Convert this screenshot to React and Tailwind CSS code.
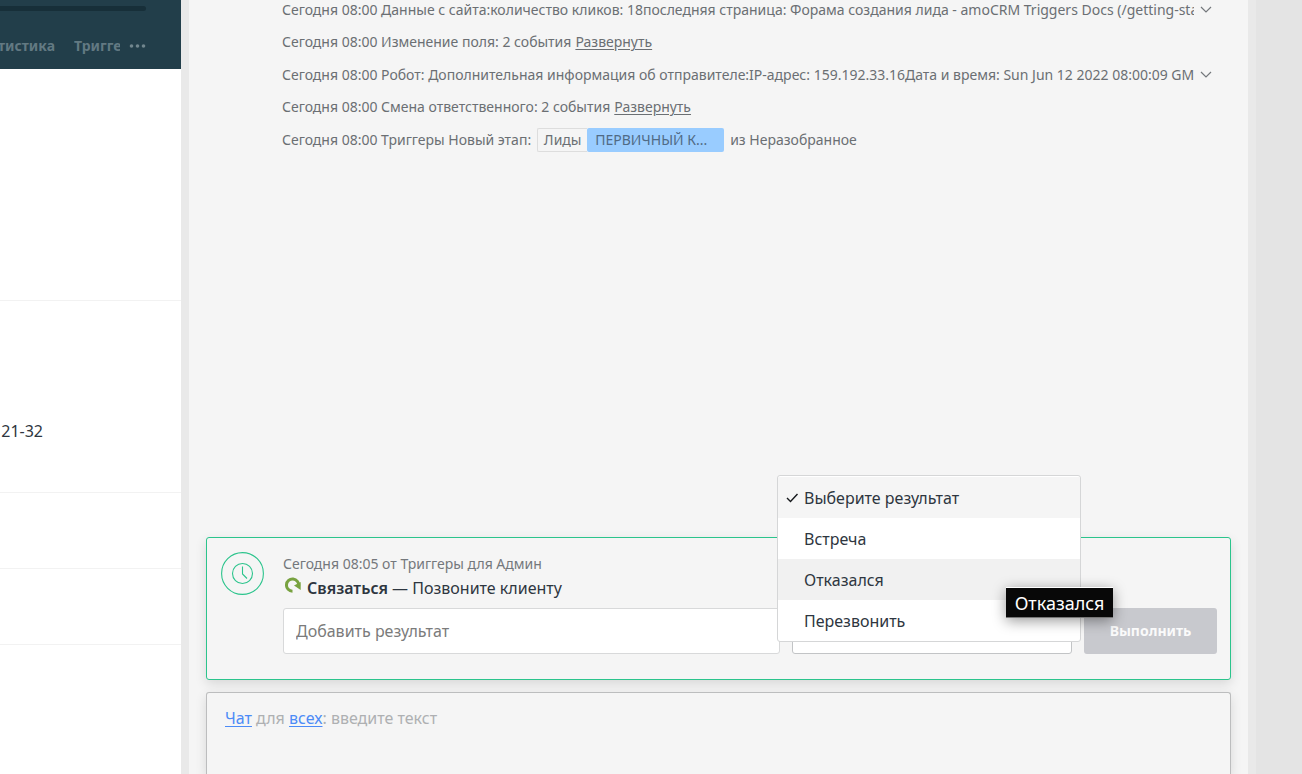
import { useState } from 'react';

const results = ['Выберите результат', 'Встреча', 'Отказался', 'Перезвонить'];

function Chevron() {
  return (
    <svg width="12" height="8" viewBox="0 0 12 8" fill="none" stroke="#74787c" strokeWidth="1.2">
      <path d="M1 1l5 5 5-5" />
    </svg>
  );
}

function LongEvent({ children }) {
  return (
    <li className="flex h-[25px] items-center gap-1">
      <p className="min-w-0 flex-1 overflow-hidden whitespace-nowrap">{children}</p>
      <button type="button" aria-label="Развернуть" className="flex h-4 w-4 shrink-0 items-center justify-center">
        <Chevron />
      </button>
    </li>
  );
}

function GroupEvent({ children }) {
  return (
    <li className="flex h-6 items-center gap-1 whitespace-nowrap">
      <span>{children}</span>
      <a href="#expand" className="underline underline-offset-2">Развернуть</a>
    </li>
  );
}

function Sidebar() {
  return (
    <aside className="flex w-[181px] shrink-0 flex-col overflow-hidden bg-white">
      <header className="h-[69px] bg-[#223e4a] pt-1.5">
        <div className="mr-[35px] h-[5px] rounded-r-full bg-[#172f39]" />
        <nav className="mt-[23px] flex h-6 items-center text-sm font-bold text-[#627982]">
          <div className="flex w-[120px] justify-end gap-[19px] overflow-hidden whitespace-nowrap">
            <a href="#stats">Статистика</a>
            <a href="#triggers" className="w-[46px] shrink-0 overflow-hidden">Триггеры</a>
          </div>
          <button type="button" aria-label="Ещё" className="ml-[9px]">
            <svg width="17" height="6" viewBox="0 0 17 6" fill="#71868e">
              <circle cx="2.5" cy="3" r="1.8" />
              <circle cx="8.5" cy="3" r="1.8" />
              <circle cx="14.5" cy="3" r="1.8" />
            </svg>
          </button>
        </nav>
      </header>
      <div className="h-[232px] border-b border-[#f2f2f2]" />
      <div className="flex h-48 items-center border-b border-[#f2f2f2]">
        <div className="mt-[68px] flex w-[43px] justify-end overflow-hidden whitespace-nowrap text-base text-[#2e3640]">
          21-32
        </div>
      </div>
      <div className="h-[76px] border-b border-[#f2f2f2]" />
      <div className="h-[76px] border-b border-[#f2f2f2]" />
    </aside>
  );
}

function ResultPicker() {
  const [value, setValue] = useState(results[0]);
  return (
    <div className="relative w-[280px] shrink-0">
      <select
        aria-label="Результат"
        value={value}
        onChange={(e) => setValue(e.target.value)}
        className="h-[46px] w-full appearance-none rounded-[3px] border border-[#c2c4c6] bg-white px-3 text-base text-[#2e3640]"
      >
        {results.map((r) => <option key={r}>{r}</option>)}
      </select>
      <ul className="absolute -left-[15px] bottom-3 z-10 w-[304px] rounded-[3px] border border-[#d5d6d7] bg-white pt-px text-base text-[#2e3640]">
        {results.map((r, i) => (
          <li key={r} className={i === 0 ? 'relative bg-[#f5f5f5]' : i === 2 ? 'relative bg-[#f1f1f1]' : ''}>
            <button type="button" onClick={() => setValue(r)} className="flex h-[41px] w-full items-center pl-2 text-left">
              <span className="flex w-[18px] shrink-0">
                {value === r && (
                  <svg width="13" height="10" viewBox="0 0 13 10" fill="none" stroke="#15181b" strokeWidth="1.4">
                    <path d="M1 5l3.5 3.5L11.5 1" />
                  </svg>
                )}
              </span>
              {r}
            </button>
            {i === 2 && (
              <span role="tooltip" className="absolute left-[228px] top-[28px] z-20 flex h-[31px] w-[107px] items-center justify-center border border-x-0 border-b-[#777777] border-t-white bg-[#080808] text-lg text-white shadow-[0_3px_14px_rgba(0,0,0,0.4)]">
                Отказался
              </span>
            )}
          </li>
        ))}
      </ul>
    </div>
  );
}

function TaskCard() {
  return (
    <section className="flex shrink-0 rounded-[3px] border border-[#2bc48c] bg-[#f5f5f5] pb-[25px] pl-[14px] pr-[13px] pt-[14px] shadow-[0_4px_12px_rgba(0,0,0,0.12)]">
      <svg className="mr-[19px] shrink-0" width="43" height="43" viewBox="0 0 43 43" fill="none" stroke="#2bc48c" strokeWidth="1.1">
        <circle cx="21.5" cy="21.5" r="20.9" />
        <circle cx="21.5" cy="21.5" r="10" />
        <path d="M21.5 14.5v7.5l4.5 4.5" />
      </svg>
      <div className="min-w-0 flex-1">
        <p className="h-6 text-sm leading-6 text-[#74787c]">Сегодня 08:05 от Триггеры для Админ</p>
        <p className="flex h-6 items-center text-base text-[#2e3640]">
          <svg className="mb-1.5 ml-0.5 mr-1.5 shrink-0" width="16" height="16" viewBox="0 0 16 16">
            <path d="M7.5 14.2A6.1 6.1 0 1 1 13.6 9" fill="none" stroke="#78a240" strokeWidth="3" />
            <path d="M15.7 5v8L9 8.6z" fill="#78a240" />
          </svg>
          <span><b className="font-semibold">Связаться</b> — Позвоните клиенту</span>
        </p>
        <div className="mt-2 flex gap-3">
          <input
            type="text"
            aria-label="Добавить результат"
            placeholder="Добавить результат"
            className="h-[46px] min-w-0 flex-1 rounded-[3px] border border-[#d8d9da] bg-white px-3 text-base placeholder:text-[#7b7b7b]"
          />
          <ResultPicker />
          <button type="button" className="h-[46px] w-[133px] shrink-0 rounded-[3px] bg-[#c8c9ce] text-sm font-bold text-[#fafafa]">
            Выполнить
          </button>
        </div>
      </div>
    </section>
  );
}

export default function App() {
  return (
    <div className="flex h-screen overflow-hidden bg-[#e4e4e4] font-['Noto_Sans',sans-serif]">
      <Sidebar />
      <main className="flex min-w-0 flex-1 flex-col border-x-8 border-[#e9e9e9] bg-[#f5f5f5] px-[17px]">
        <ul className="-mt-[3px] flex min-h-0 flex-1 flex-col gap-2 pl-[76px] pr-[17px] text-sm text-[#6b6f73]">
          <LongEvent>
            Сегодня 08:00 Данные с сайта:количество кликов: 18последняя страница: Форама создания лида - amoCRM Triggers Docs (/getting-started)
          </LongEvent>
          <GroupEvent>Сегодня 08:00 Изменение поля: 2 события</GroupEvent>
          <LongEvent>
            Сегодня 08:00 Робот: Дополнительная информация об отправителе:IP-адрес: 159.192.33.16Дата и время: Sun Jun 12 2022 08:00:09 GMT+0000
          </LongEvent>
          <GroupEvent>Сегодня 08:00 Смена ответственного: 2 события</GroupEvent>
          <li className="flex h-[26px] items-center gap-1.5 whitespace-nowrap">
            <span>Сегодня 08:00 Триггеры Новый этап:</span>
            <span className="flex h-6">
              <span className="flex w-[50px] items-center justify-center rounded-l-[2px] border border-r-0 border-[#dddddd]">Лиды</span>
              <span className="flex w-[137px] items-center rounded-[2px] bg-[#99ccff] px-2 text-[#506a85]">ПЕРВИЧНЫЙ К...</span>
            </span>
            <span>из Неразобранное</span>
          </li>
        </ul>
        <TaskCard />
        <section className="mt-3 h-[82px] shrink-0 rounded-t-[3px] border border-b-0 border-[#bcbdbe] bg-[#f5f5f5] px-[18px] pt-[13px] text-base text-[#aeb0b2] shadow-[0_4px_12px_rgba(0,0,0,0.12)]">
          <a href="#chat" className="text-[#4c8bf7] underline underline-offset-2">Чат</a> для{' '}
          <a href="#all" className="text-[#4c8bf7] underline underline-offset-2">всех</a>: введите текст
        </section>
      </main>
      <div className="w-[46px] shrink-0" />
    </div>
  );
}
